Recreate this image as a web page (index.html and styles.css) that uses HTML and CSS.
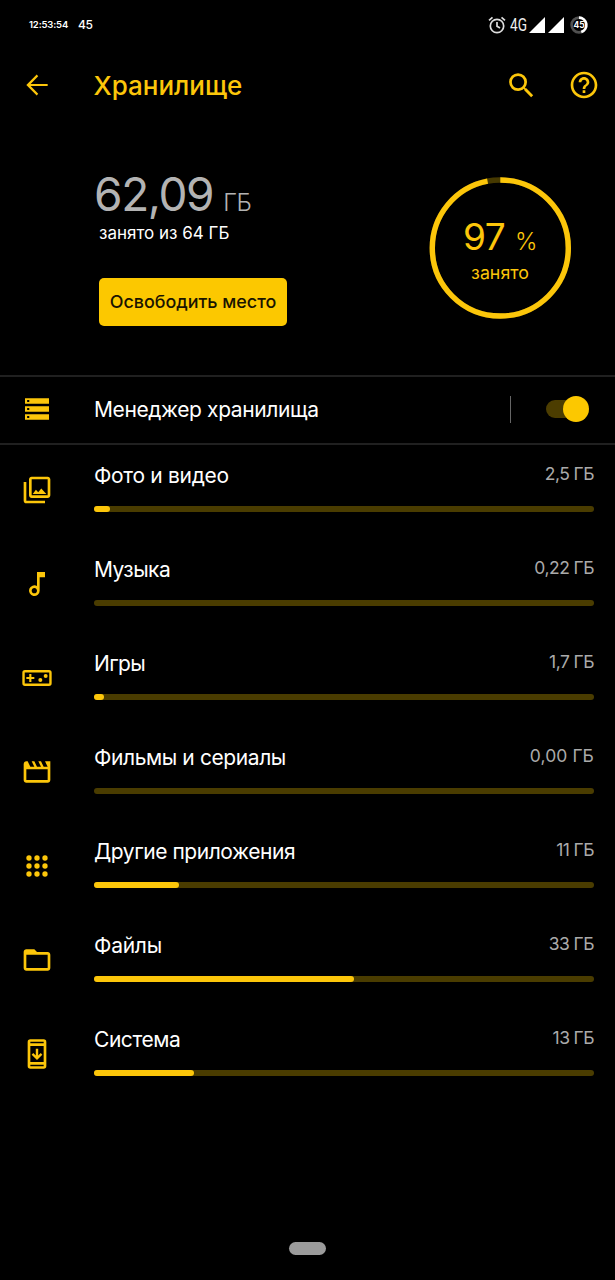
FILE: index.html
```html
<!DOCTYPE html>
<html lang="ru">
<head>
<meta charset="utf-8">
<title>Хранилище</title>
<link rel="stylesheet" href="styles.css">
</head>
<body>
<div class="screen">
  <div class="status">
    <span class="clock">12:53:54</span><span class="temp">45</span>
    <div class="status-icons">
      <svg class="alarm" width="18" height="18" viewBox="0 0 18 18" fill="none" stroke="#ddd" stroke-width="1.7"><circle cx="9" cy="10" r="6.7"/><path d="M9 6v4.300l3 1.800M1 4.300l3.500-3M17 4.300l-3.500-3"/></svg>
      <span class="net">4G</span>
      <svg class="signal" width="16" height="16" viewBox="0 0 16 16"><path d="M0 16L16 0v16z" fill="#fff"/></svg>
      <svg class="signal second" width="16" height="16" viewBox="0 0 16 16"><path d="M0 16L16 0v16z" fill="#fff"/></svg>
      <div class="battery">
        <svg width="18" height="18" viewBox="0 0 18 18" fill="none" stroke-width="2.600"><circle cx="9" cy="9" r="7.400" stroke="#505050"/><path d="M9 1.600A7.400 7.400 0 0 1 11.300 16" stroke="#fff"/></svg>
        <span>45</span>
      </div>
    </div>
  </div>

  <header class="appbar">
    <svg class="back" width="32" height="32" viewBox="0 0 24 24"><path d="M20 11.200H7.200l5.700-5.800L11.800 4.200 4 12l7.800 7.800 1.100-1.200-5.700-5.800H20z"/></svg>
    <h1>Хранилище</h1>
    <svg class="search" width="33" height="33" viewBox="0 0 24 24"><path d="M15.500 14h-.79l-.28-.27A6.471 6.471 0 0 0 16 9.500 6.500 6.500 0 1 0 9.500 16c1.610 0 3.090-.59 4.230-1.570l.27.28v.79l5 4.990L20.490 19l-4.990-5zm-6 0C7.010 14 5 11.990 5 9.500S7.010 5 9.500 5 14 7.010 14 9.500 11.990 14 9.500 14z"/></svg>
    <svg class="help" width="32" height="32" viewBox="0 0 24 24"><path d="M11 18h2v-2h-2v2zm1-16C6.480 2 2 6.480 2 12s4.480 10 10 10 10-4.480 10-10S17.520 2 12 2zm0 18c-4.410 0-8-3.590-8-8s3.590-8 8-8 8 3.590 8 8-3.590 8-8 8zm0-14c-2.210 0-4 1.790-4 4h2c0-1.100.9-2 2-2s2 .9 2 2c0 2-3 1.750-3 5h2c0-2.250 3-2.500 3-5 0-2.210-1.790-4-4-4z"/></svg>
  </header>

  <section class="summary">
    <div class="usage">
      <div class="amount"><span class="value">62,09</span><span class="unit">ГБ</span></div>
      <div class="total">занято из 64 ГБ</div>
      <button class="free">Освободить место</button>
    </div>
    <div class="ring">
      <svg width="142" height="142" viewBox="0 0 142 142" fill="none" stroke-width="5.400"><circle cx="71.300" cy="71" r="68" stroke="#463900"/><circle cx="71.300" cy="71" r="68" stroke="#fcc60a" pathLength="100" stroke-dasharray="97 3" transform="rotate(-90 71.300 71)"/></svg>
      <div class="ring-text">
        <div class="percent"><span>97</span><span class="sign">%</span></div>
        <div class="ring-label">занято</div>
      </div>
    </div>
  </section>

  <section class="manager">
    <svg class="icon" width="32" height="32" viewBox="0 0 24 24"><path fill-rule="evenodd" d="M3 4h18v4H3zM4.600 5.200v1.600h1.600V5.200zM3 10h18v4H3zM4.600 11.200v1.600h1.600v-1.600zM3 16h18v4H3zM4.600 17.200v1.600h1.600v-1.600z"/></svg>
    <span class="label w-manager">Менеджер хранилища</span>
    <i class="divider"></i>
    <div class="switch"><i></i></div>
  </section>

  <main class="list">
    <div class="row">
      <svg class="icon" width="32" height="32" viewBox="0 0 24 24"><path d="M20 4v12H8V4h12m0-2H8c-1.100 0-2 .9-2 2v12c0 1.100.9 2 2 2h12c1.100 0 2-.9 2-2V4c0-1.100-.9-2-2-2zM8.800 15l2.400-3.100 1.700 1.800 2.300-2.900L19 15zM2 6v14c0 1.100.9 2 2 2h14v-2H4V6H2z"/></svg>
      <div class="body"><div class="text"><span class="label w-photo">Фото и видео</span><span class="size">2,5 ГБ</span></div><div class="bar"><i style="width:3.100%"></i></div></div>
    </div>
    <div class="row">
      <svg class="icon" width="32" height="32" viewBox="0 0 24 24"><path d="M12 3v10.550A4 4 0 1 0 14 17V7h4V3h-6zm-2 16c-1.100 0-2-.9-2-2s.9-2 2-2 2 .9 2 2-.9 2-2 2z"/></svg>
      <div class="body"><div class="text"><span class="label w-music">Музыка</span><span class="size">0,22 ГБ</span></div><div class="bar"></div></div>
    </div>
    <div class="row">
      <svg class="icon" width="32" height="32" viewBox="0 0 24 24"><path fill-rule="evenodd" d="M3 6h18a2 2 0 0 1 2 2v8a2 2 0 0 1-2 2H3a2 2 0 0 1-2-2V8a2 2 0 0 1 2-2zM2.800 7.800v8.400h18.400V7.800z"/><path d="M6.200 9h1.600v2.200H10v1.600H7.800V15H6.200v-2.200H4v-1.600h2.200z"/><circle cx="14.500" cy="13.500" r="1.500"/><circle cx="18.500" cy="10.500" r="1.500"/></svg>
      <div class="body"><div class="text"><span class="label w-games">Игры</span><span class="size">1,7 ГБ</span></div><div class="bar"><i style="width:2%"></i></div></div>
    </div>
    <div class="row">
      <svg class="icon" width="32" height="32" viewBox="0 0 24 24"><path d="M18 4l2 4h-3l-2-4h-2l2 4h-3l-2-4H8l2 4H7L5 4H4c-1.100 0-1.990.9-1.990 2L2 18c0 1.100.9 2 2 2h16c1.100 0 2-.9 2-2V4h-4zm2 14H4v-8h16v8z"/></svg>
      <div class="body"><div class="text"><span class="label w-movies">Фильмы и сериалы</span><span class="size size-wide">0,00 ГБ</span></div><div class="bar"></div></div>
    </div>
    <div class="row">
      <svg class="icon" width="32" height="32" viewBox="0 0 24 24"><circle cx="6" cy="6" r="2"/><circle cx="12" cy="6" r="2"/><circle cx="18" cy="6" r="2"/><circle cx="6" cy="12" r="2"/><circle cx="12" cy="12" r="2"/><circle cx="18" cy="12" r="2"/><circle cx="6" cy="18" r="2"/><circle cx="12" cy="18" r="2"/><circle cx="18" cy="18" r="2"/></svg>
      <div class="body"><div class="text"><span class="label w-apps">Другие приложения</span><span class="size">11 ГБ</span></div><div class="bar"><i style="width:17%"></i></div></div>
    </div>
    <div class="row">
      <svg class="icon" width="32" height="32" viewBox="0 0 24 24"><path fill-rule="evenodd" d="M4 4h6l2 2h8c1.100 0 2 .9 2 2v10c0 1.100-.9 2-2 2H4c-1.100 0-2-.9-2-2V6c0-1.100.9-2 2-2zM4 8v10h16V8z"/></svg>
      <div class="body"><div class="text"><span class="label w-files">Файлы</span><span class="size">33 ГБ</span></div><div class="bar"><i style="width:52%"></i></div></div>
    </div>
    <div class="row">
      <svg class="icon" width="32" height="32" viewBox="0 0 24 24"><path fill-rule="evenodd" d="M7 1h10a2 2 0 0 1 2 2v18a2 2 0 0 1-2 2H7a2 2 0 0 1-2-2V3a2 2 0 0 1 2-2zM7 2.800V4h10V2.800zM7 6v12h10V6zM7 20v1.200h10V20z"/><path d="M16 12.500l-4 4-4-4 1.200-1.200 1.900 1.900V8h1.800v5.200l1.900-1.900z"/></svg>
      <div class="body"><div class="text"><span class="label w-system">Система</span><span class="size">13 ГБ</span></div><div class="bar"><i style="width:20%"></i></div></div>
    </div>
  </main>
  <footer class="nav"><i class="pill"></i></footer>
</div>
</body>
</html>
```
FILE: styles.css
```css
* { box-sizing: border-box; }
body { margin: 0; background: #000; font-family: Inter, Roboto, sans-serif; color: #fff; }
.screen { width: 615px; height: 1280px; display: flex; flex-direction: column; background: #000; overflow: hidden; }
svg { display: block; flex: none; }
span { white-space: nowrap; }
.status { height: 49px; display: flex; align-items: center; padding: 0 27px 0 29px; }
.clock { font-size: 9.500px; font-weight: 600; width: 49px; letter-spacing: -0.150px; }
.temp { font-size: 12px; font-weight: 500; letter-spacing: -0.300px; }
.status-icons { margin-left: auto; display: flex; align-items: center; }
.net { font: 17.500px/20px Roboto, sans-serif; width: 19px; margin-left: 4px; color: #eee; transform: scaleX(0.780); transform-origin: left; }
.signal.second { margin-left: 3px; }
.battery { display: grid; place-items: center; margin-left: 6px; }
.battery > * { grid-area: 1 / 1; }
.battery span { font-size: 8.500px; font-weight: 700; line-height: 10px; }
.appbar { height: 72px; display: flex; align-items: center; padding: 0 15.500px 0 20.500px; fill: #fcc60a; }
.appbar h1 { margin: 1px auto 0 41px; font-size: 26px; font-weight: 500; line-height: 32px; color: #fcc60a; }
.search { margin-top: 1px; }
.help { margin-left: 30px; }
.summary { height: 254px; display: flex; justify-content: space-between; padding: 56px 44px 0 94px; }
.amount { display: flex; align-items: baseline; color: #b3b3b3; height: 44px; line-height: 34px; }
.value { font-size: 46px; font-weight: 400; line-height: 34px; letter-spacing: -1.400px; }
.unit { font-size: 24px; font-weight: 300; margin-left: 10px; letter-spacing: -0.500px; }
.total { margin: 1px 0 0 5px; font-size: 17px; line-height: 22px; }
.free { display: block; margin: 34px 0 0 5px; width: 188px; height: 48px; border: 0; border-radius: 5px; padding: 0 0 2px; background: #fcc800; color: #1a1400; font: 500 17.900px Inter, sans-serif; white-space: nowrap; }
.ring { display: grid; width: 142px; height: 142px; }
.ring > * { grid-area: 1 / 1; }
.ring-text { color: #fcc60a; text-align: center; padding-top: 40px; }
.percent { display: flex; justify-content: center; align-items: baseline; font-size: 37px; line-height: 40px; letter-spacing: -0.500px; }
.sign { font-size: 24px; font-weight: 300; margin-left: 10px; }
.ring-label { font-size: 17.800px; line-height: 22px; }
.manager { height: 70px; border-top: 2px solid #202020; border-bottom: 2px solid #202020; display: flex; align-items: center; padding: 0 26px 2px 21px; }
.icon { fill: #fcc60a; }
.manager .icon { margin-top: -1px; }
.label { font-size: 21px; line-height: 26px; }
.w-manager { letter-spacing: -0.390px; }
.w-photo { letter-spacing: -0.320px; }
.w-music { letter-spacing: -0.550px; }
.w-games { letter-spacing: -0.600px; }
.w-movies { letter-spacing: -0.400px; }
.w-apps { letter-spacing: -0.440px; }
.w-files { letter-spacing: -0.250px; }
.w-system { letter-spacing: -0.450px; }
.manager .label { margin-left: 41px; margin-top: 1px; }
.divider { width: 1px; height: 27px; margin-left: auto; background: #666; }
.switch { width: 43px; height: 26px; margin-left: 35px; display: flex; align-items: center; }
.switch::before { content: ""; width: 35px; height: 18px; border-radius: 9px; background: #4c3d00; }
.switch i { width: 26px; height: 26px; margin-left: -18px; border-radius: 50%; background: #fcc800; flex: none; }
.list { margin-top: -1px; padding-top: 1px; }
.row { height: 94px; display: flex; align-items: flex-start; padding: 0 21px; }
.row .icon { margin: 29px 0 0 -0.500px; }
.body { flex: 1; margin-left: 41.500px; padding-top: 18px; }
.text { display: flex; justify-content: space-between; align-items: center; height: 26px; }
.size { font-size: 17.500px; line-height: 24px; color: #aaa; margin-top: -5px; letter-spacing: -0.450px; word-spacing: -0.500px; }
.size-wide { letter-spacing: 0.080px; word-spacing: 0; }
.bar { height: 6px; margin-top: 17px; border-radius: 3px; background: #4a3c00; }
.bar i { display: block; height: 6px; border-radius: 3px; background: #fcc60a; }
.nav { margin-top: auto; height: 38px; display: flex; justify-content: center; }
.pill { width: 37px; height: 13px; border-radius: 7px; background: #9b9b9b; }
```
